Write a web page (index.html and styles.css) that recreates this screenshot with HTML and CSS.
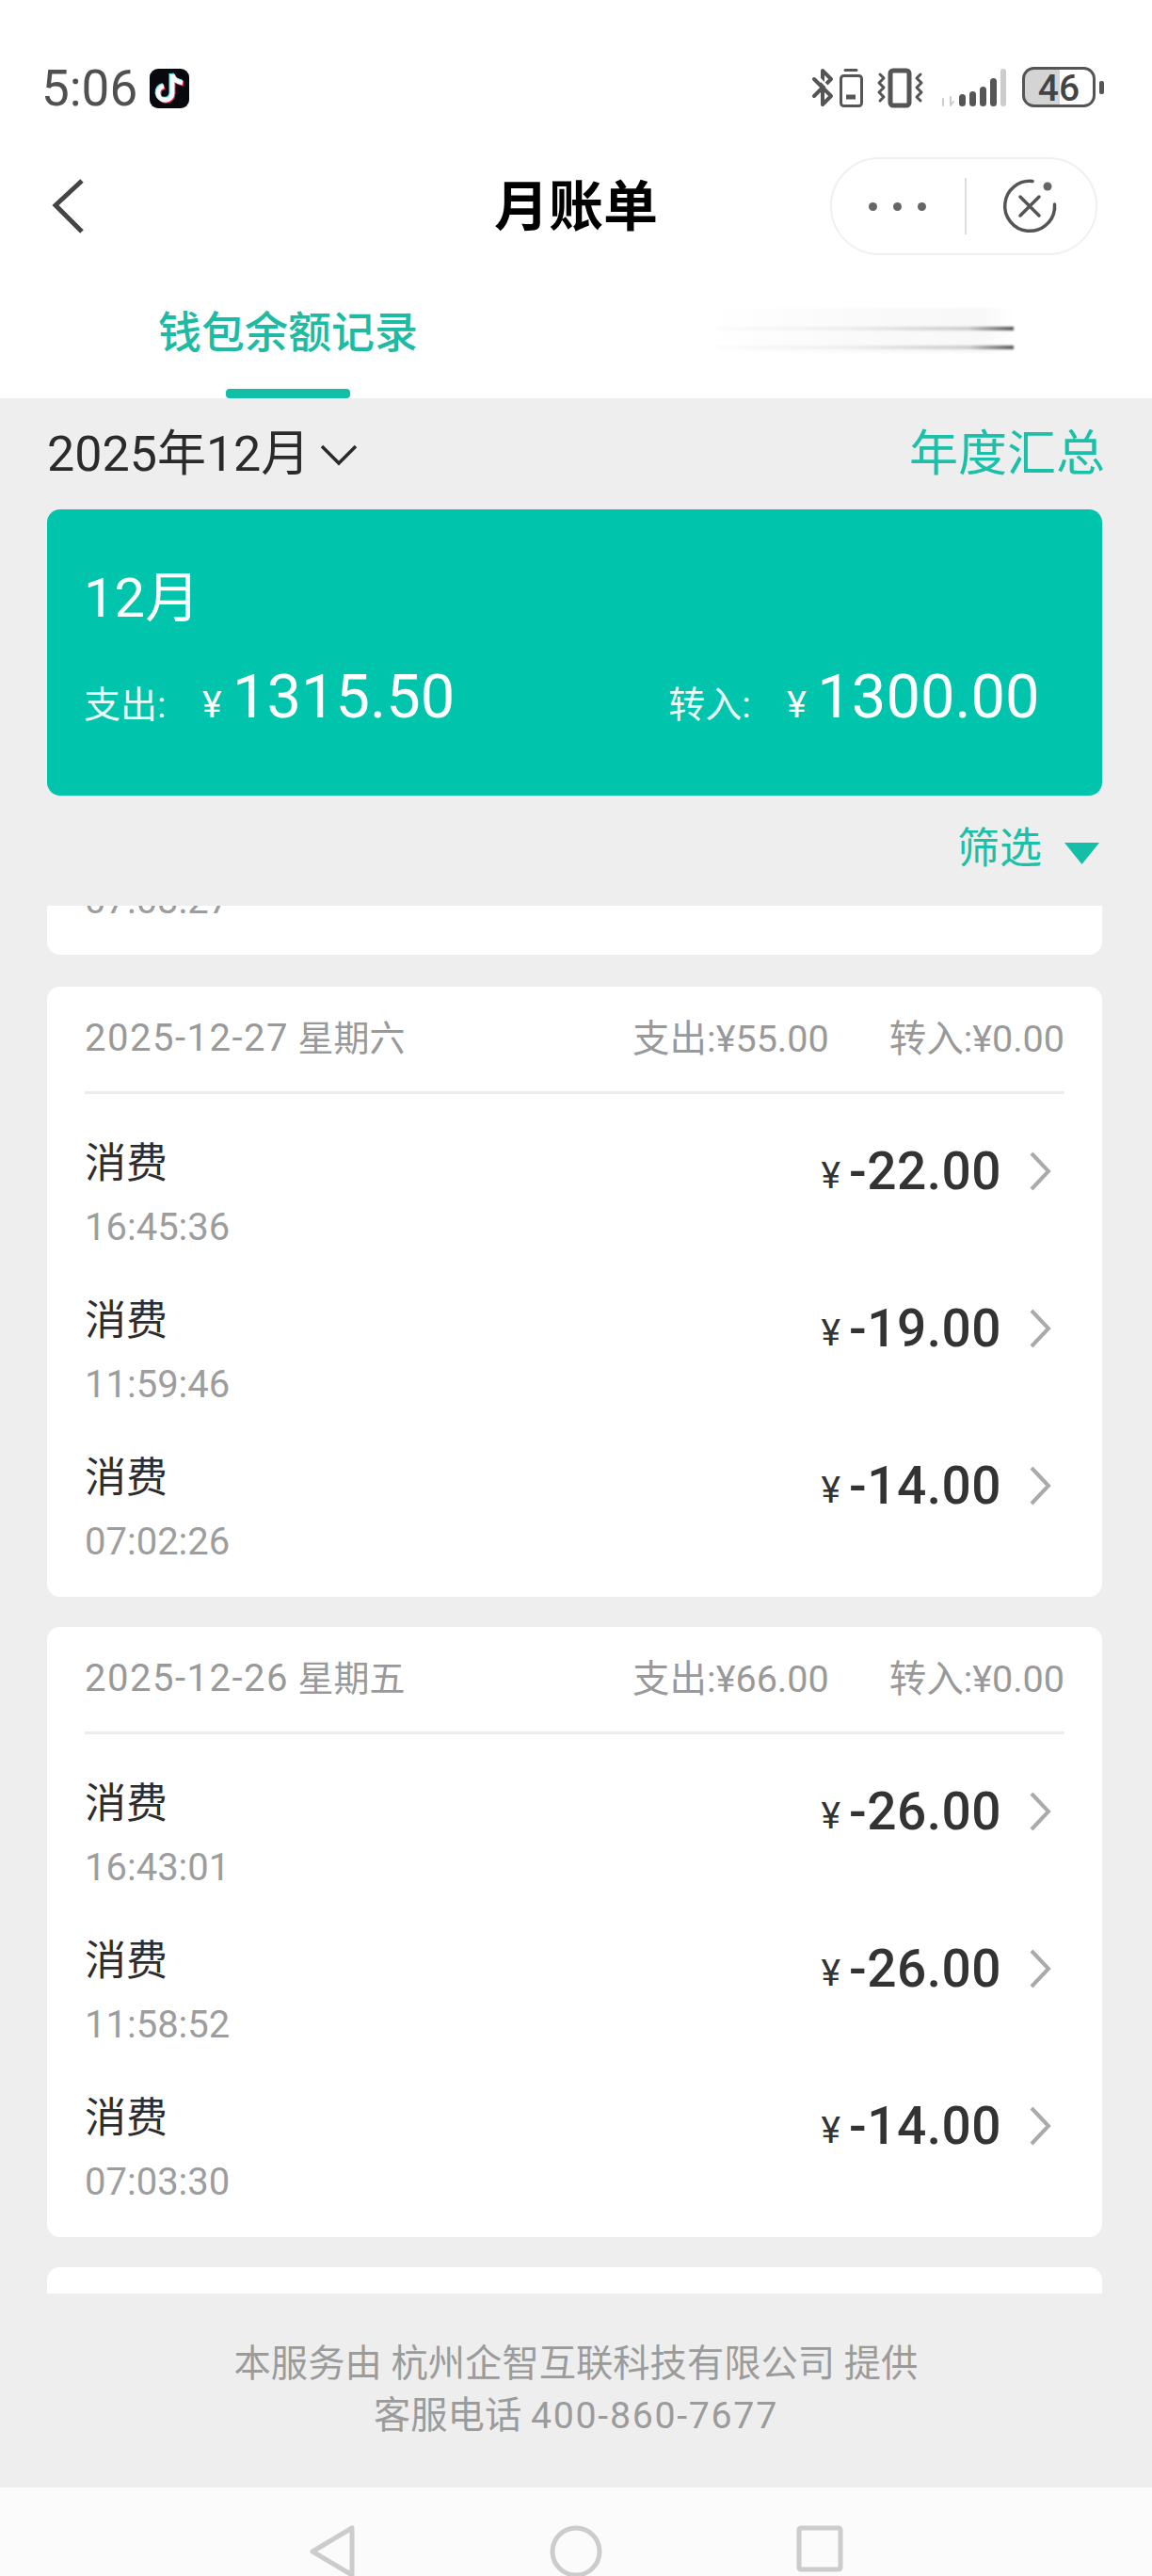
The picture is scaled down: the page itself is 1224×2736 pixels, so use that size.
FILE: index.html
```html
<!DOCTYPE html>
<html lang="zh-CN">
<head>
<meta charset="utf-8">
<title>月账单</title>
<link rel="stylesheet" href="styles.css">
</head>
<body>
<div class="page">
  <header class="top">
    <div class="status">
      <div class="status-left">
        <span class="clock">5:06</span>
        <svg class="tiktok" viewBox="0 0 42 42" width="42" height="42">
          <rect width="42" height="42" rx="9" fill="#08080f"/>
          <g fill="none" stroke-width="5">
            <g stroke="#5fe3e6" transform="translate(-1 -1)"><path d="M24 6V26A7.5 7.5 0 1 1 15 18.500"/><path d="M24 6C25 11 30 14 35 15"/></g>
            <g stroke="#ee2a55" transform="translate(1 1)"><path d="M24 6V26A7.5 7.5 0 1 1 15 18.500"/><path d="M24 6C25 11 30 14 35 15"/></g>
            <g stroke="#f2fbfb"><path d="M24 6V26A7.5 7.500 0 1 1 15 18.500"/><path d="M24 6C25 11 30 14 35 15"/></g>
          </g>
        </svg>
      </div>
      <svg class="status-icons" viewBox="862 70 313 46" width="313" height="46">
        <g fill="none" stroke="#555" stroke-linecap="round" stroke-linejoin="round">
          <path stroke-width="4" d="M866 84L884 102L875 111V75L884 84L866 102"/>
          <path stroke-width="3" d="M864 76L886 98" stroke="#fff"/>
          <rect x="894.500" y="80.500" width="22" height="32" rx="3" stroke-width="3"/>
          <path stroke-width="3" d="M899 74.500H911"/>
          <path stroke-width="5" stroke-linecap="butt" d="M900 103H910"/>
          <rect x="947" y="75" width="20" height="37" rx="3" stroke-width="5"/>
          <path stroke-width="3" d="M936 79L940 83L935 88L940 93L935 98L940 103L936 107"/>
          <path stroke-width="3" d="M979 79L975 83L980 88L975 93L980 98L975 103L979 107"/>
          <path stroke="#ccc" stroke-width="2" d="M1003 105V112M1011 103V112M1011 112L1014 108"/>
        </g>
        <g fill="#555">
          <rect x="1020" y="100" width="7" height="13" rx="3.500"/>
          <rect x="1031" y="97" width="7" height="16" rx="3.500"/>
          <rect x="1042" y="92" width="7" height="21" rx="3.500"/>
          <rect x="1053" y="83" width="7" height="30" rx="3.500"/>
          <rect x="1064" y="73" width="6" height="40" rx="3" fill="#ccc"/>
          <rect x="1169" y="86" width="5" height="14" rx="2"/>
        </g>
        <path d="M1098 73H1127V112H1098A10 10 0 0 1 1088 102V83A10 10 0 0 1 1098 73Z" fill="#d4d4d4"/>
        <rect x="1088.500" y="72.500" width="75" height="40" rx="11" fill="none" stroke="#555" stroke-width="3"/>
        <text class="batt-text" x="1126" y="107" text-anchor="middle">46</text>
      </svg>
    </div>
    <nav class="navbar">
      <svg class="back" viewBox="0 0 40 60" width="40" height="60"><path d="M35 3L7 29L35 57" fill="none" stroke="#444" stroke-width="5"/></svg>
      <h1 class="title">月账单</h1>
      <div class="capsule">
        <div class="dots"><i></i><i></i><i></i></div>
        <span class="cap-line"></span>
        <svg class="close" viewBox="0 0 60 60" width="60" height="60">
          <path d="M33 3.500A26.500 26.500 0 1 0 56.500 33" fill="none" stroke="#555" stroke-width="3.500" stroke-linecap="round"/>
          <path d="M56.500 33V28" fill="none" stroke="#555" stroke-width="3.500" stroke-linecap="round"/>
          <circle cx="49" cy="9" r="4.500" fill="#666"/>
          <path d="M20 20L40 40M40 20L20 40" stroke="#555" stroke-width="3.500" stroke-linecap="round"/>
        </svg>
      </div>
    </nav>
    <div class="tabs">
      <div class="tab">
        <span class="tab-text">钱包余额记录</span>
        <span class="tab-bar"></span>
      </div>
      <div class="tab">
        <div class="smudge"><span></span><span></span></div>
      </div>
    </div>
  </header>

  <main class="body">
    <div class="month-row">
      <div class="month-pick">
        <span>2025年12月</span>
        <svg viewBox="0 0 40 24" width="40" height="24"><path d="M2 3L20 21L38 3" fill="none" stroke="#2a2a2a" stroke-width="3.500"/></svg>
      </div>
      <span class="year-link">年度汇总</span>
    </div>

    <section class="summary">
      <div class="summary-month">12月</div>
      <div class="summary-row">
        <div class="sum-item"><span class="sum-label">支出:</span><span class="sum-yen">¥</span><span class="sum-value">1315.50</span></div>
        <div class="sum-item"><span class="sum-label">转入:</span><span class="sum-yen">¥</span><span class="sum-value">1300.00</span></div>
      </div>
    </section>

    <div class="filter">
      <span>筛选</span>
      <svg viewBox="0 0 37 23" width="37" height="23"><path d="M0 0H37L18.500 23Z" fill="#14bfa7"/></svg>
    </div>

    <div class="scroller">
      <div class="card card-tail"><div class="time tail-time">07:03:27</div></div>

      <section class="card">
        <div class="day-head">
          <span class="day-date"><span class="day-num">2025-12-27</span> 星期六</span>
          <div class="day-sums"><span>支出:¥55.00</span><span>转入:¥0.00</span></div>
        </div>
        <div class="rows">
          <div class="row"><div><div class="kind">消费</div><div class="time">16:45:36</div></div><div class="amt"><span class="amt-yen">¥</span><span class="amt-val">-22.00</span><svg class="more" viewBox="0 0 24 42" width="24" height="42"><path d="M3 2L21 21L3 40" fill="none" stroke="#aaa" stroke-width="4"/></svg></div></div>
          <div class="row"><div><div class="kind">消费</div><div class="time">11:59:46</div></div><div class="amt"><span class="amt-yen">¥</span><span class="amt-val">-19.00</span><svg class="more" viewBox="0 0 24 42" width="24" height="42"><path d="M3 2L21 21L3 40" fill="none" stroke="#aaa" stroke-width="4"/></svg></div></div>
          <div class="row"><div><div class="kind">消费</div><div class="time">07:02:26</div></div><div class="amt"><span class="amt-yen">¥</span><span class="amt-val">-14.00</span><svg class="more" viewBox="0 0 24 42" width="24" height="42"><path d="M3 2L21 21L3 40" fill="none" stroke="#aaa" stroke-width="4"/></svg></div></div>
        </div>
      </section>

      <section class="card">
        <div class="day-head">
          <span class="day-date"><span class="day-num">2025-12-26</span> 星期五</span>
          <div class="day-sums"><span>支出:¥66.00</span><span>转入:¥0.00</span></div>
        </div>
        <div class="rows">
          <div class="row"><div><div class="kind">消费</div><div class="time">16:43:01</div></div><div class="amt"><span class="amt-yen">¥</span><span class="amt-val">-26.00</span><svg class="more" viewBox="0 0 24 42" width="24" height="42"><path d="M3 2L21 21L3 40" fill="none" stroke="#aaa" stroke-width="4"/></svg></div></div>
          <div class="row"><div><div class="kind">消费</div><div class="time">11:58:52</div></div><div class="amt"><span class="amt-yen">¥</span><span class="amt-val">-26.00</span><svg class="more" viewBox="0 0 24 42" width="24" height="42"><path d="M3 2L21 21L3 40" fill="none" stroke="#aaa" stroke-width="4"/></svg></div></div>
          <div class="row"><div><div class="kind">消费</div><div class="time">07:03:30</div></div><div class="amt"><span class="amt-yen">¥</span><span class="amt-val">-14.00</span><svg class="more" viewBox="0 0 24 42" width="24" height="42"><path d="M3 2L21 21L3 40" fill="none" stroke="#aaa" stroke-width="4"/></svg></div></div>
        </div>
      </section>

      <div class="card card-next"></div>
    </div>

    <footer class="foot">
      <p>本服务由 杭州企智互联科技有限公司 提供</p>
      <p>客服电话 <span class="foot-num">400-860-7677</span></p>
    </footer>
  </main>

  <div class="sysnav">
    <svg viewBox="0 0 50 56" width="50" height="56"><path d="M46 3V53L4 28Z" fill="none" stroke="#ccc" stroke-width="5" stroke-linejoin="round"/></svg>
    <svg viewBox="0 0 56 56" width="56" height="56"><circle cx="28" cy="28" r="25" fill="none" stroke="#ccc" stroke-width="5"/></svg>
    <svg viewBox="0 0 50 50" width="50" height="50"><rect x="3" y="3" width="44" height="44" rx="2" fill="none" stroke="#ccc" stroke-width="5"/></svg>
  </div>
</div>
</body>
</html>
```
FILE: styles.css
```css
* { box-sizing: border-box; }
html, body { margin: 0; padding: 0; }
body {
  width: 1224px;
  height: 2736px;
  overflow: hidden;
  font-family: Roboto, "Noto Sans CJK SC", sans-serif;
  background: #eeeeee;
}
.page { width: 1224px; height: 2736px; display: flex; flex-direction: column; }
.top { background: #fff; height: 423px; flex: none; }

.status {
  height: 167px;
  padding: 70px 50px 0 44px;
  display: flex;
  justify-content: space-between;
  align-items: flex-start;
}
.status-left { display: flex; align-items: center; gap: 13px; }
.clock { font-size: 53px; line-height: 48px; color: #505050; }
.tiktok { display: block; }
.status-icons { display: block; }
.batt-text { font: 500 39px Roboto, sans-serif; fill: #444; }

.navbar {
  height: 104px;
  display: grid;
  grid-template-columns: 1fr auto 1fr;
  align-items: center;
  padding: 0 58px;
}
.back { display: block; margin-left: -6px; }
.title { margin: 2px 0 0; font-size: 58px; font-weight: 700; line-height: 80px; color: #000; }
.capsule {
  justify-self: end;
  width: 284px;
  height: 104px;
  border: 2px solid #f0f0f0;
  border-radius: 52px;
  display: flex;
  align-items: center;
  padding-left: 39px;
}
.dots { display: flex; gap: 17px; width: 64px; }
.dots i { width: 9px; height: 9px; border-radius: 50%; background: #666; display: block; }
.cap-line { width: 2px; height: 60px; background: #ddd; margin-left: 38px; }
.close { display: block; margin-left: 37px; }

.tabs { display: grid; grid-template-columns: 1fr 1fr; height: 152px; }
.tab { display: flex; flex-direction: column; align-items: center; padding-top: 56px; }
.tab-text { font-size: 46px; line-height: 52px; font-weight: 500; color: #1dbba4; }
.tab-bar { width: 132px; height: 10px; margin-top: 34px; border-radius: 4px; background: #10bfa5; }
.smudge {
  width: 318px;
  height: 48px;
  background: linear-gradient(90deg, #ffffff, #fafafa 50%, #f8f8f8 90%, #ffffff);
  display: flex;
  flex-direction: column;
  gap: 16px;
  padding-top: 20px;
  filter: blur(1px);
}
.smudge span { height: 4px; background: linear-gradient(90deg, #fcfcfc, #eeeeee 45%, #cccccc 85%, #555); }

.body { flex: 1; display: flex; flex-direction: column; background: #eeeeee; min-height: 0; }
.month-row {
  height: 118px;
  padding: 30px 50px 0;
  display: flex;
  justify-content: space-between;
  align-items: flex-start;
}
.month-pick { display: flex; align-items: center; gap: 11px; font-size: 52px; line-height: 60px; color: #2a2a2a; }
.year-link { font-size: 52px; line-height: 60px; color: #1cbfa8; }

.summary {
  margin: 0 53px 0 50px;
  height: 304px;
  border-radius: 14px;
  background: #00c4ab;
  color: #fff;
  padding: 58px 0 0 39px;
}
.summary-month { font-size: 58px; line-height: 72px; }
.summary-row { display: flex; gap: 227px; margin-top: 29px; }
.sum-item { display: flex; flex: none; align-items: baseline; }
.sum-label { font-size: 39px; color: #e8fbf8; width: 126px; }
.sum-yen { font-size: 39px; width: 32px; }
.sum-value { font-size: 65px; line-height: 80px; }

.filter {
  height: 117px;
  padding: 26px 56px 0 0;
  display: flex;
  justify-content: flex-end;
  align-items: flex-start;
  gap: 24px;
  font-size: 45px;
  line-height: 62px;
  color: #1cbfa8;
}
.filter svg { margin-top: 24px; }

.scroller {
  flex: none;
  height: 1474px;
  overflow: hidden;
  padding: 0 53px 0 50px;
  display: flex;
  flex-direction: column;
  gap: 32px;
}
.card { background: #fff; border-radius: 14px; height: 648px; flex: none; padding: 0 40px; }
.card-tail {
  height: 52px;
  margin-bottom: 2px;
  border-radius: 0 0 14px 14px;
  overflow: hidden;
}
.card-tail .tail-time { margin-top: -27px; }
.card-next { height: 60px; }

.day-head {
  height: 114px;
  border-bottom: 3px solid #ececec;
  display: flex;
  justify-content: space-between;
  align-items: center;
  font-size: 38px;
  color: #999;
  padding-bottom: 8px;
}
.day-num { font-size: 40px; letter-spacing: 1.5px; }
.day-sums { display: flex; gap: 64px; font-size: 39.5px; }
.rows { padding-top: 20px; display: flex; flex-direction: column; }
.row { height: 167px; display: flex; justify-content: space-between; align-items: flex-start; padding-right: 14px; }
.kind { font-size: 44px; line-height: 60px; color: #2d2d2d; margin-top: 24px; }
.time { font-size: 40px; line-height: 44px; color: #9d9d9d; margin-top: 16px; }
.amt { display: flex; align-items: center; margin-top: 36px; height: 52px; }
.amt-yen { font-size: 39px; color: #333; margin-top: 10px; margin-right: 9px; }
.amt-val { font-size: 55px; font-weight: 500; color: #333; letter-spacing: .5px; }
.more { display: block; margin-left: 29px; }

.foot { flex: 1; padding-top: 48px; text-align: center; font-size: 39.3px; line-height: 55px; color: #9b9b9b; }
.foot p { margin: 0; }
.foot-num { letter-spacing: 1.7px; }

.sysnav {
  height: 94px;
  flex: none;
  background: #fbfbfb;
  position: relative;
  display: flex;
  justify-content: center;
  gap: 206px;
  padding-top: 40px;
  overflow: hidden;
}
.sysnav svg { flex: none; display: block; }
```
